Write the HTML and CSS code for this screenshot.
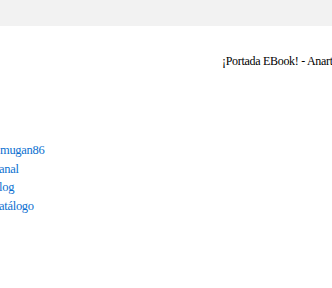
FILE: index.html
```html
<!DOCTYPE html>
<html lang="es">
<head>
<meta charset="utf-8">
<title>Anartz Mugika</title>
<link rel="stylesheet" href="styles.css">
</head>
<body>
<header class="topbar"></header>
<main class="page">
  <p class="cover-title">¡Portada EBook! - Anartz Mugika</p>
  <ul class="links">
    <li class="handle"><a href="#">mugan86</a></li>
    <li><a href="#">Canal</a></li>
    <li><a href="#">Blog</a></li>
    <li><a href="#">Catálogo</a></li>
  </ul>
</main>
</body>
</html>
```
FILE: styles.css
```css
html, body {
  margin: 0;
  padding: 0;
  background: #ffffff;
  overflow: hidden;
}
body {
  width: 332px;
  height: 288px;
  font-family: "Liberation Serif", "Times New Roman", serif;
  font-size: 12px;
  letter-spacing: -0.3px;
  color: #000;
}
.topbar {
  height: 26px;
  background: #f2f2f2;
}
.page {
  display: flex;
  flex-direction: column;
}
.cover-title {
  margin: 28px 0 0 222px;
  white-space: nowrap;
  line-height: 15px;
}
.links {
  list-style: none;
  margin: 72px 0 0 -9px;
  padding: 0;
  line-height: 18.7px;
  font-size: 12.5px;
}
.links a {
  color: #0b6fd0;
  text-decoration: none;
}
.links .handle {
  padding-left: 9px;
}
```
